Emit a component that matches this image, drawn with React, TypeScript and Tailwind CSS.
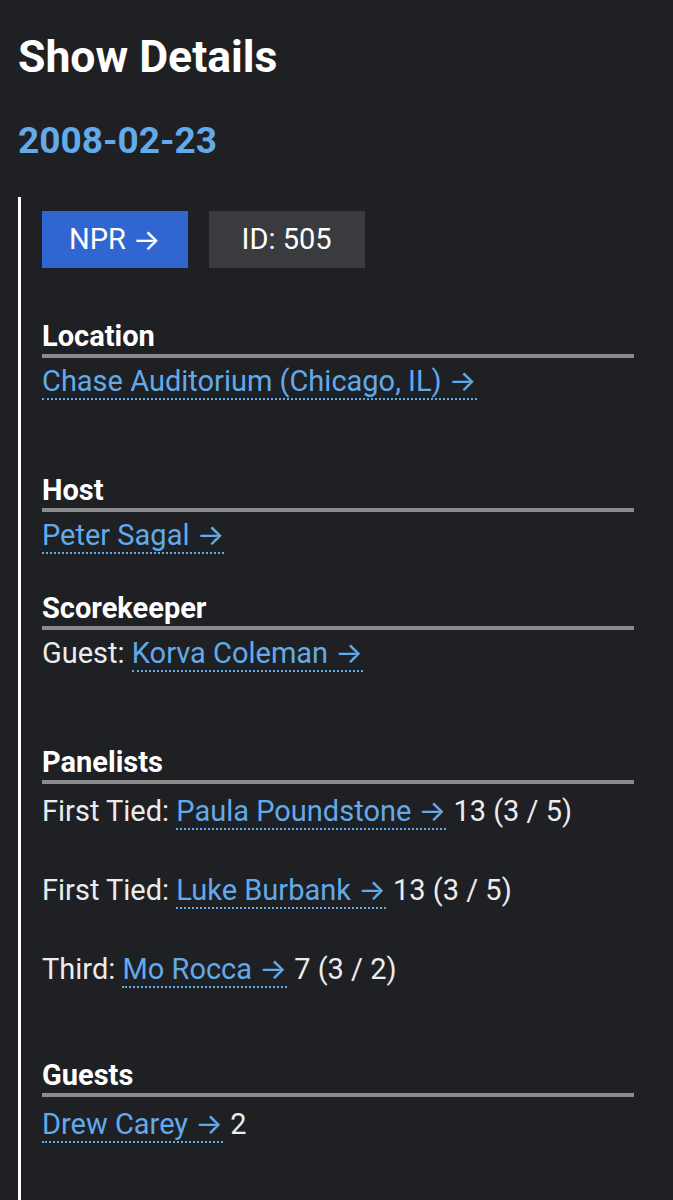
const panelists = [
  { rank: "First Tied", name: "Paula Poundstone", score: "13 (3 / 5)" },
  { rank: "First Tied", name: "Luke Burbank", score: "13 (3 / 5)" },
  { rank: "Third", name: "Mo Rocca", score: "7 (3 / 2)" },
];

function Arrow() {
  return <span className="font-['Inter',sans-serif]">→</span>;
}

function Link({ children }: { children: React.ReactNode }) {
  return (
    <a href="#" className="text-[#62aae9] border-b-2 border-dotted border-[#62aae9]">
      {children} <Arrow />
    </a>
  );
}

function Section({ title, children, className }: { title: string; children: React.ReactNode; className?: string }) {
  return (
    <section className={className}>
      <h3 className="text-[29px] font-bold leading-[36px] text-white border-b-4 border-[#8b8b8b]">{title}</h3>
      {children}
    </section>
  );
}

export default function App() {
  return (
    <div className="min-h-screen bg-[#1f2024] px-[18px] pt-[31px] pb-10 font-['Roboto','Noto_Sans',sans-serif] text-[#ececec]">
      <h1 className="text-[44.5px] font-bold leading-[52px] text-white">Show Details</h1>
      <h2 className="mt-[36px] text-[37px] font-bold leading-[44px] text-[#62aae9]">2008-02-23</h2>

      <div className="mt-[34px] border-l-[3px] border-white pl-[21px] pr-[21px] pt-[14px] min-h-[1010px]">
        <div className="flex gap-[21px]">
          <a href="#" className="flex h-[57px] items-center gap-[7px] bg-[#3166d2] px-[27px] text-[29px] text-white">
            NPR <Arrow />
          </a>
          <span className="flex h-[57px] items-center bg-[#3a3b3f] px-[33px] text-[29px] text-white">ID: 505</span>
        </div>

        <Section title="Location" className="mt-[50px]">
          <p className="mt-[3px] text-[29px] leading-[40px]">
            <Link>Chase Auditorium (Chicago, IL)</Link>
          </p>
        </Section>

        <Section title="Host" className="mt-[71px]">
          <p className="mt-[3px] text-[29px] leading-[40px]">
            <Link>Peter Sagal</Link>
          </p>
        </Section>

        <Section title="Scorekeeper" className="mt-[35px]">
          <p className="mt-[3px] text-[29px] leading-[40px]">
            Guest: <Link>Korva Coleman</Link>
          </p>
        </Section>

        <Section title="Panelists" className="mt-[71px]">
          <div className="mt-[7px] flex flex-col gap-[39px]">
            {panelists.map((p) => (
              <p key={p.name} className="text-[29px] leading-[40px]">
                {p.rank}: <Link>{p.name}</Link> {p.score}
              </p>
            ))}
          </div>
        </Section>

        <Section title="Guests" className="mt-[68px]">
          <p className="mt-[7px] text-[29px] leading-[40px]">
            <Link>Drew Carey</Link> 2
          </p>
        </Section>
      </div>
    </div>
  );
}
